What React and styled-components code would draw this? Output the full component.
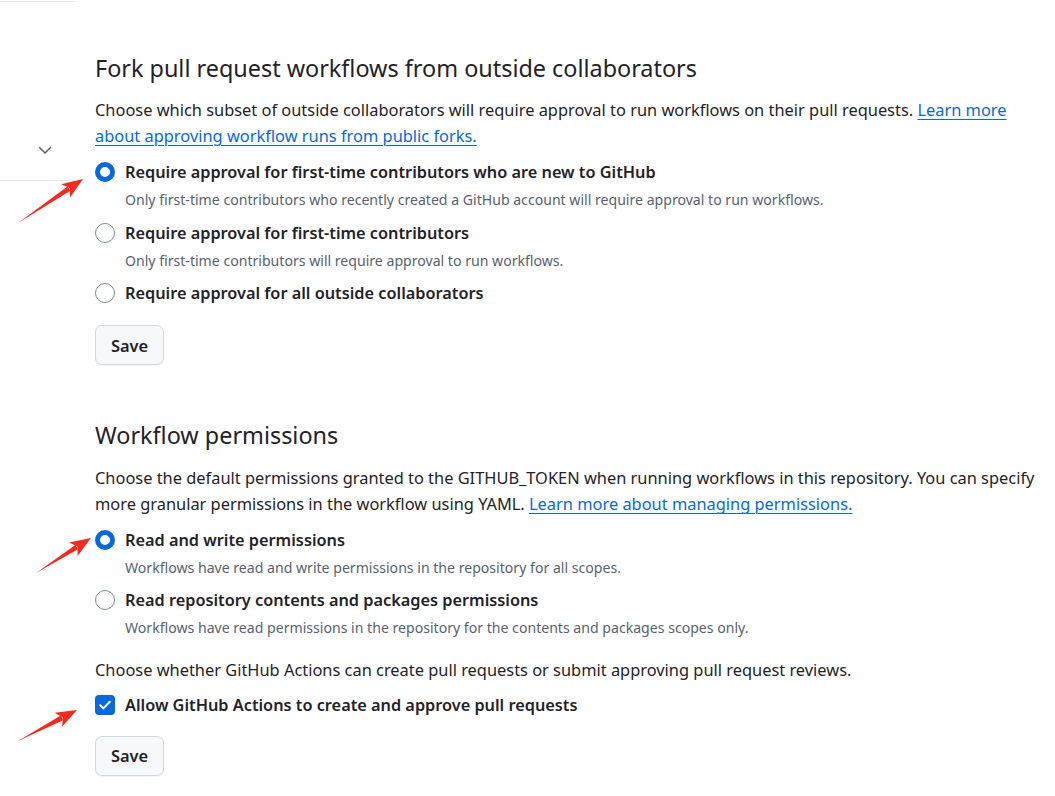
import styled, { createGlobalStyle } from "styled-components";

const GlobalStyle = createGlobalStyle`
  body {
    margin: 0;
    background: #ffffff;
    font-family: "Noto Sans", "Liberation Sans", sans-serif;
    color: #1f2328;
  }
`;

const textColor = "#1f2328";
const mutedColor = "#59636e";
const blue = "#0969da";
const borderColor = "#d1d9e0";

const Page = styled.div`
  position: relative;
  display: flex;
  width: 1055px;
  min-height: 796px;
  overflow: hidden;
`;

const Sidebar = styled.aside`
  width: 75px;
  flex-shrink: 0;
  padding-top: 1px;
`;

const SideItem = styled.div`
  height: 180px;
  border-top: 1px solid #e6e9ec;
  border-bottom: 1px solid #e6e9ec;
  display: flex;
  align-items: flex-end;
  padding: 0 0 22px 37px;
  box-sizing: border-box;
  color: ${mutedColor};
`;

const Main = styled.main`
  flex: 1;
  padding: 50px 15px 0 20px;
`;

const Section = styled.section`
  display: flex;
  flex-direction: column;
  & + & {
    margin-top: 52px;
  }
`;

const Heading = styled.h2`
  margin: 0 0 ${(p) => p.$gap || 10}px;
  font-size: 23.4px;
  line-height: 37px;
  font-weight: 400;
  color: ${textColor};
`;

const Para = styled.p`
  margin: ${(p) => p.$top || 0}px 0 0;
  font-size: 16.4px;
  line-height: 26px;
  color: ${textColor};
`;

const Link = styled.a`
  color: ${blue};
  text-decoration: underline;
  text-underline-offset: 3px;
  text-decoration-thickness: 1px;
  cursor: pointer;
`;

const OptionList = styled.div`
  display: flex;
  flex-direction: column;
  gap: ${(p) => p.$gap || 8.3}px;
  margin-top: ${(p) => p.$top}px;
`;

const Option = styled.label`
  display: grid;
  grid-template-columns: 20px 1fr;
  column-gap: 10px;
  align-items: center;
`;

const Radio = styled.span`
  width: 20px;
  height: 20px;
  box-sizing: border-box;
  border-radius: 50%;
  background: #ffffff;
  border: ${(p) => (p.$checked ? `5px solid ${blue}` : "1px solid #818b98")};
`;

const Checkbox = styled.span`
  width: 20px;
  height: 20px;
  border-radius: 4px;
  background: ${blue};
  display: flex;
  align-items: center;
  justify-content: center;
`;

const OptionLabel = styled.span`
  font-size: 16.3px;
  line-height: 26px;
  font-weight: 600;
  color: ${textColor};
`;

const OptionNote = styled.span`
  grid-column: 2;
  margin-top: 4.4px;
  font-size: 14.1px;
  line-height: 22px;
  color: ${mutedColor};
`;

const Button = styled.button`
  align-self: flex-start;
  margin-top: ${(p) => p.$top}px;
  box-sizing: border-box;
  height: 40px;
  padding: 0 15px;
  font-family: inherit;
  font-size: 16.4px;
  font-weight: 600;
  color: ${textColor};
  background: #f6f8fa;
  border: 1px solid ${borderColor};
  border-radius: 7px;
  box-shadow: 0 1px 0 rgba(31, 35, 40, 0.04);
`;

const Annotations = styled.svg`
  position: absolute;
  left: 0;
  top: 0;
  pointer-events: none;
`;

const arrows = [
  { x: 18, y: 223, tx: 83, ty: 179 },
  { x: 36, y: 573, tx: 91, ty: 538 },
  { x: 18, y: 741, tx: 77, ty: 710 },
];

const Arrow = ({ x, y, tx, ty }) => {
  const dx = tx - x;
  const dy = ty - y;
  const len = Math.sqrt(dx * dx + dy * dy);
  const angle = (Math.atan2(dy, dx) * 180) / Math.PI;
  const h = len - 17;
  return (
    <g transform={`translate(${x} ${y}) rotate(${angle})`} fill="#f42a1f">
      <polygon points={`0,0 ${h},-2.6 ${h},2.6`} />
      <polygon points={`${h - 4},-8 ${len},0 ${h - 4},8 ${h + 1},0`} />
    </g>
  );
};

const Chevron = () => (
  <svg width="16" height="16" viewBox="0 0 16 16" fill="none">
    <path d="M2.5 5.5 8 11l5.5-5.5" stroke="currentColor" strokeWidth="1.5" strokeLinecap="round" strokeLinejoin="round" />
  </svg>
);

const Check = () => (
  <svg width="14" height="14" viewBox="0 0 14 14" fill="none">
    <path d="M2.2 7.3 5.4 10.4 11.8 3.8" stroke="#fff" strokeWidth="2" strokeLinecap="round" strokeLinejoin="round" />
  </svg>
);

export default function App() {
  return (
    <Page>
      <GlobalStyle />
      <Sidebar>
        <SideItem>
          <Chevron />
        </SideItem>
      </Sidebar>
      <Main>
        <Section>
          <Heading>Fork pull request workflows from outside collaborators</Heading>
          <Para>
            Choose which subset of outside collaborators will require approval to run workflows on their pull
            requests. <Link>Learn more about approving workflow runs from public forks.</Link>
          </Para>
          <OptionList $top={10}>
            <Option>
              <Radio $checked />
              <OptionLabel>Require approval for first-time contributors who are new to GitHub</OptionLabel>
              <OptionNote>
                Only first-time contributors who recently created a GitHub account will require approval to run
                workflows.
              </OptionNote>
            </Option>
            <Option>
              <Radio />
              <OptionLabel>Require approval for first-time contributors</OptionLabel>
              <OptionNote>Only first-time contributors will require approval to run workflows.</OptionNote>
            </Option>
            <Option>
              <Radio />
              <OptionLabel>Require approval for all outside collaborators</OptionLabel>
            </Option>
          </OptionList>
          <Button $top={19}>Save</Button>
        </Section>

        <Section>
          <Heading $gap={11}>Workflow permissions</Heading>
          <Para>
            Choose the default permissions granted to the GITHUB_TOKEN when running workflows in this repository.
            You can specify more granular permissions in the workflow using YAML.{" "}
            <Link>Learn more about managing permissions.</Link>
          </Para>
          <OptionList $top={9.6} $gap={7.6}>
            <Option>
              <Radio $checked />
              <OptionLabel>Read and write permissions</OptionLabel>
              <OptionNote>Workflows have read and write permissions in the repository for all scopes.</OptionNote>
            </Option>
            <Option>
              <Radio />
              <OptionLabel>Read repository contents and packages permissions</OptionLabel>
              <OptionNote>
                Workflows have read permissions in the repository for the contents and packages scopes only.
              </OptionNote>
            </Option>
          </OptionList>
          <Para $top={17.6}>
            Choose whether GitHub Actions can create pull requests or submit approving pull request reviews.
          </Para>
          <OptionList $top={8.6}>
            <Option>
              <Checkbox>
                <Check />
              </Checkbox>
              <OptionLabel>Allow GitHub Actions to create and approve pull requests</OptionLabel>
            </Option>
          </OptionList>
          <Button $top={18.2}>Save</Button>
        </Section>
      </Main>
      <Annotations width="1055" height="796">
        {arrows.map((a, i) => (
          <Arrow key={i} {...a} />
        ))}
      </Annotations>
    </Page>
  );
}
